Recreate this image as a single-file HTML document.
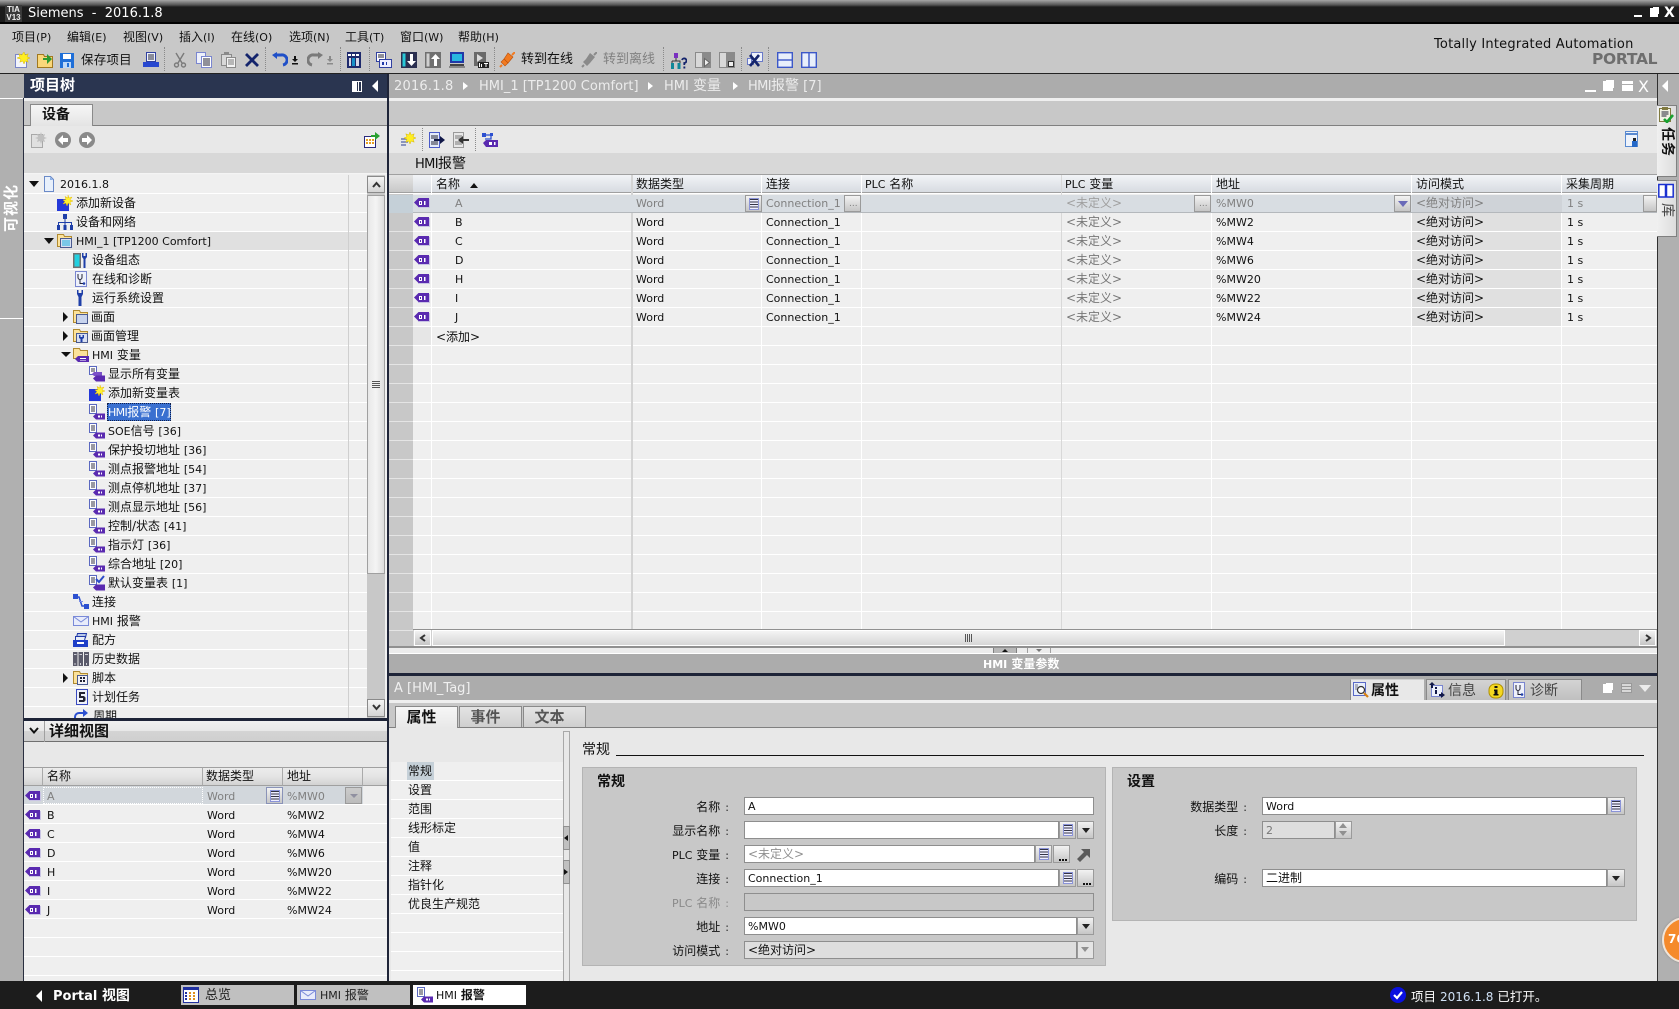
<!DOCTYPE html>
<html lang="zh"><head><meta charset="utf-8"><title>Siemens - 2016.1.8</title>
<style>
html,body{margin:0;padding:0;width:1679px;height:1009px;overflow:hidden;background:#e8e8e8}
body{position:relative;font:12px/19px "DejaVu Sans","WenQuanYi Zen Hei","Noto Sans CJK SC",sans-serif;color:#111}
div,p,svg{position:absolute;margin:0;box-sizing:border-box}
p{white-space:nowrap;height:19px;line-height:19px}
svg{width:16px;height:16px;overflow:visible}
u{text-decoration:none;font-size:11px}
u.n{letter-spacing:-.6px}
em{font-style:normal;font-size:14px}
.g{color:#808080}
.w{color:#fff}
.sep{width:0;border-left:1px dotted #8a8a8a;top:47px;height:24px}
.hd{top:175px;height:18px;background:linear-gradient(#f2f4f7,#d6dae0);border-right:1px solid #b4b4b4}
.dh{top:767px;height:19px;background:linear-gradient(#ececec 0,#e4e4e4 50%,#d2d2d2);border-top:1px solid #a0a0a0;border-bottom:1px solid #a0a0a0;border-right:1px solid #aaa}
.f{background:#fff;border:1px solid #8e8e8e;height:18px;padding-left:3px;line-height:17px;white-space:nowrap}
.b{background:linear-gradient(#f2f2f2,#c6c6c6);border:1px solid #9a9a9a;height:18px;width:17px}
.tab{top:706px;height:21px;border:1px solid #8a8a8a;border-bottom:0;background:linear-gradient(#e4e4e4,#cfcfcf);padding:0 10px 0 0;text-align:center;font-size:15px;font-weight:bold;line-height:20px;color:#555}
.v{background:#fff;top:175px;width:1px}
.lb{text-align:right}
.lb span{margin-left:5px;font-size:11px;color:#222}
.dot:before{content:"";position:absolute;left:5px;top:13px;width:8px;height:2px;background:repeating-linear-gradient(90deg,#111 0 2px,transparent 2px 3px)}
.dn:before{content:"";position:absolute;left:4px;top:6px;border:4px solid transparent;border-top:5px solid #222;border-bottom:0}
.ls:before{content:"";position:absolute;left:3px;top:2px;width:10px;height:12px;background:repeating-linear-gradient(#334 0 1px,#eef 1px 2.5px);border:1px solid #8a93d8;box-sizing:border-box}
</style></head>
<body>
<svg style="display:none"><defs>
<symbol id="tag" viewBox="0 0 16 10"><path fill="#c9c4e4" d="M4 1h12v9H4z"/><path fill="#5a2ab0" d="M0 4.500 4.500 0H15v9H4.500z"/><path fill="#fff" d="M5 3h3v4H5zM10 3h1.500v4H10z"/><path fill="#5a2ab0" d="M6 4h1v2H6z"/></symbol>
<symbol id="tb" viewBox="0 0 16 16"><path fill="#fff" stroke="#5a68c0" d="M.5.5h7v9h-7z"/><path stroke="#334" d="M2 3h4M2 5h4M2 7h4"/><path fill="#5a2ab0" d="M4 12.500 7 9.500h9v6H7z"/><path fill="#fff" d="M9 11.500h2v2H9zM12 11.500h1v2h-1z"/></symbol>
<symbol id="tball" viewBox="0 0 16 16"><path fill="#fff" stroke="#5a68c0" d="M.5.5h7v8h-7z"/><path stroke="#334" d="M2 3h4M2 5h4"/><path fill="#7a50c8" d="M3 8l2-2h8v4H5z"/><path fill="#5a2ab0" d="M4 12.500 7 9.500h9v6H7z"/></symbol>
<symbol id="tbc" viewBox="0 0 16 16"><path fill="#fff" stroke="#5a68c0" d="M.5.500h7v9h-7z"/><path stroke="#334" d="M2 3h4M2 5h4M2 7h4"/><path fill="#5a2ab0" d="M4 12.500 7 9.500h9v6H7z"/><path fill="none" stroke="#2c4cc8" stroke-width="2" d="M7 4l3 3 5-6"/></symbol>
<symbol id="add" viewBox="0 0 16 16"><path fill="#2438d8" d="M0 4h12v12H0z"/><path fill="#fff030" stroke="#e8c000" stroke-width=".5" d="M11 0l1 3 3-1-2 3 3 1-3 1 1 3-3-2-1 3-1-3-3 1 2-2.500-2-1.500 3-.5-1-3 3 1.500z"/></symbol>
<symbol id="net" viewBox="0 0 16 16"><g fill="#1f3fa8"><path d="M6 0h4v5H6zM7.500 5h1v3h-1zM1 8h14v1H1zM1 9h1v2H1zM7.500 9h1v2h-1zM14 9h1v2h-1zM0 11h3v5H0zM6.500 11h3v5h-3zM13 11h3v5h-3z"/></g></symbol>
<symbol id="proj" viewBox="0 0 16 16"><path fill="#e8f0fb" stroke="#6a8ac8" d="M3.500.5h6l3 3v12h-9z"/><path fill="#8ab0e8" d="M9 1l3 3H9z"/></symbol>
<symbol id="hmi" viewBox="0 0 16 16"><path fill="#fce29a" stroke="#b08a30" d="M.5 1.500h6l1 2h7v10h-14z"/><path fill="#d8dff0" stroke="#4a5a90" d="M3.500 5.500h11v9h-11z"/><path fill="#78c8e8" d="M5 7h8v6H5z"/></symbol>
<symbol id="cfg" viewBox="0 0 16 16"><path fill="#707070" d="M0 1h8v15H0z"/><path fill="#22d0e0" d="M1.500 2.500h5v12h-5z"/><path fill="#1f3fa8" d="M9 1h1.500v3h2V1H14v4l-1.500 2v9h-2V7L9 5z"/></symbol>
<symbol id="diag" viewBox="0 0 16 16"><path fill="#eef1fb" stroke="#7a86d0" d="M2.500.5h11v15h-11z"/><path fill="none" stroke="#223" d="M5 3v3.500a2 2 0 0 0 4 0V3M7 9v3.500h3"/><circle cx="11" cy="12.500" r="1.300" fill="#1f3fa8"/></symbol>
<symbol id="wr" viewBox="0 0 16 16"><path fill="#1f3fa8" d="M4 0h1.500v3h3V0H10v4L8.500 7v9h-3V7L4 4z"/></symbol>
<symbol id="fscr" viewBox="0 0 16 16"><path fill="#fce29a" stroke="#b08a30" d="M.5 1.500h6l1 2h7v10h-14z"/><path fill="#c8d4ee" stroke="#4a5a90" d="M3.500 5.500h11v9h-11z"/></symbol>
<symbol id="fwr" viewBox="0 0 16 16"><path fill="#fce29a" stroke="#b08a30" d="M.5 1.500h6l1 2h7v10h-14z"/><path fill="#d8dff0" stroke="#4a5a90" d="M3.500 5.500h11v9h-11z"/><path fill="#1f3fa8" d="M6 7h1.500v2h2V7H11v3l-1.500 1v3h-2v-3L6 10z"/></symbol>
<symbol id="ftag" viewBox="0 0 16 16"><path fill="#fce29a" stroke="#b08a30" d="M.5 1.500h6l1 2h7v8h-14z"/><path fill="#5a2ab0" d="M2 12l3-3h11v6H5z"/><path fill="#fff" d="M7 11h6v1H7zM7 13h6v.5H7z"/></symbol>
<symbol id="fscp" viewBox="0 0 16 16"><path fill="#fce29a" stroke="#b08a30" d="M.5 1.500h6l1 2h7v10h-14z"/><path fill="#f2f2f8" stroke="#4a5a90" d="M4.500 5.500h10v9h-10z"/><path fill="#223" d="M7 7h2v2H7zM10 7h2v2h-2zM7 10h2v2H7zM10 10h2v2h-2z"/></symbol>
<symbol id="conn" viewBox="0 0 16 16"><path fill="none" stroke="#2c50d0" stroke-width="1.500" d="M3 3h3l3 9h4"/><path fill="#2c50d0" d="M0 0h5v5H0zM11 10h5v5h-5z"/><path fill="#7a8ce8" d="M6 7h4v1H6z"/></symbol>
<symbol id="mail" viewBox="0 0 16 16"><path fill="#e8ecfb" stroke="#7a8ad8" d="M.5 3.500h15v9h-15z"/><path fill="none" stroke="#7a8ad8" d="M.5 3.500 8 9l7.500-5.500"/></symbol>
<symbol id="rec" viewBox="0 0 16 16"><path fill="#b8c8e8" stroke="#2038a8" d="M4.500 1.500h9l-1 4h-9z"/><path fill="#e8eef8" stroke="#2038a8" d="M2.500 4.500h10l-1 4h-9z"/><path fill="#1f3fc8" d="M0 8h15v7H0z"/><path fill="#fff" d="M4 10h7v2H4z"/></symbol>
<symbol id="his" viewBox="0 0 16 16"><path fill="#5a5a6a" d="M0 1h4.500v14H0zM5.500 1H10v14H5.500zM11 1h5v14h-5z"/><path fill="#d0d0d8" d="M1 3h2.500v1H1zM6.500 3H9v1H6.500zM12 3h3v1h-3zM1.500 12h1v2h-1zM7 12h1v2H7zM13 12h1v2h-1z"/></symbol>
<symbol id="five" viewBox="0 0 16 16"><path fill="#eef1fb" stroke="#3a4ac0" d="M2.500.5h11v15h-11z"/><path fill="#223" d="M5 3h6v2H7v2h3l1.500 1.500v3L10 13H5v-2h4V9H5z"/></symbol>
<symbol id="cyc" viewBox="0 0 16 16"><path fill="none" stroke="#2c50d0" stroke-width="2" d="M2 15V9a4 4 0 0 1 4-4h6"/><path fill="#2c50d0" d="M10 1l5 4-5 4z"/></symbol>
<symbol id="new" viewBox="0 0 16 16"><path fill="#f2f4fb" stroke="#7a86c8" d="M1.500 2.500h11v13h-11z"/><path fill="#ffee22" stroke="#d8b800" stroke-width=".5" d="M10 0l1.200 3 3-1.200-1.200 3L16 6l-3 1.200 1.200 3-3-1.200-1.200 3-1.200-3-3 1.200 1.200-3L3 6l3-1.200-1.200-3 3 1.200z"/></symbol>
<symbol id="open" viewBox="0 0 16 16"><path fill="#fad77a" stroke="#a07820" d="M.5 2.500h6l1 2h8v11h-15z"/><path fill="#2c9a30" d="M6 6h4V2l5 5-5 5V8H6z"/></symbol>
<symbol id="save" viewBox="0 0 16 16"><path fill="#1f6fd8" d="M1 1h14v15H1z"/><path fill="#fff" d="M4 2h8v5H4z"/><path fill="#bcd8f8" d="M4 10h8v6H4z"/><path fill="#1f6fd8" d="M8 11h2v4H8z"/></symbol>
<symbol id="print" viewBox="0 0 16 16"><path fill="#f0f4ff" stroke="#3040a0" d="M3.500.5h9v9h-9z"/><path stroke="#223" d="M5 3h6M5 5h6M5 7h6"/><path fill="#2848d0" d="M0 10h16v5H0z"/></symbol>
<symbol id="cut" viewBox="0 0 16 16"><path fill="none" stroke="#7a7a7a" stroke-width="1.400" d="M4 1l6 10M12 1 6 11"/><circle cx="4.500" cy="13" r="2" fill="none" stroke="#7a7a7a" stroke-width="1.400"/><circle cx="11.500" cy="13" r="2" fill="none" stroke="#7a7a7a" stroke-width="1.400"/></symbol>
<symbol id="copy" viewBox="0 0 16 16"><path fill="#eef1fb" stroke="#7a86d0" d="M.5.5h9v11h-9z"/><path fill="#fff" stroke="#7a86d0" d="M5.500 4.500h10v11h-10z"/><path stroke="#223" d="M7 7h7M7 9h7M7 11h7M7 13h7"/></symbol>
<symbol id="paste" viewBox="0 0 16 16"><path fill="#d8d8d8" stroke="#8a8a8a" d="M1.500 2.500h10v11h-10z"/><path fill="#8a8a8a" d="M4 0h5v3H4z"/><path fill="#f4f4f4" stroke="#8a8a8a" d="M6.500 5.500h9v10h-9z"/><path stroke="#777" d="M8 8h6M8 10h6M8 12h6"/></symbol>
<symbol id="del" viewBox="0 0 16 16"><path fill="none" stroke="#14246c" stroke-width="2.800" d="M2 2l12 12M14 2 2 14"/></symbol>
<symbol id="undo" viewBox="0 0 16 16"><path fill="none" stroke="#2050c8" stroke-width="3" d="M4 3h5a5 5 0 0 1 2 10"/><path fill="#2050c8" d="M0 3l5-3v7z"/></symbol>
<symbol id="redo" viewBox="0 0 16 16"><path fill="none" stroke="#7a7a7a" stroke-width="3" d="M12 3H7a5 5 0 0 0-2 10"/><path fill="#7a7a7a" d="M16 3l-5-3v7z"/></symbol>
<symbol id="dnl" viewBox="0 0 8 16"><path fill="#111" d="M3 4h2v3h2L4 10 1 7h2zM1 11h6v1.500H1z"/></symbol>
<symbol id="dng" viewBox="0 0 8 16"><path fill="#8a8a8a" d="M3 4h2v3h2L4 10 1 7h2zM1 11h6v1.500H1z"/></symbol>
<symbol id="tbl" viewBox="0 0 16 16"><path fill="#1e2a6c" d="M1 0h14v16H1z"/><path fill="#fff" d="M2 2h3v2H2zM6 2h3v2H6zM10 2h3v2h-3z"/><path fill="#d8d8e8" d="M3 6h2v8H3zM10 6h3v8h-3z"/><path fill="#1890c8" d="M6 6h3v8H6z"/></symbol>
<symbol id="devb" viewBox="0 0 16 16"><path fill="#fff" stroke="#3040a0" d="M.5.500h9v9h-9z"/><path stroke="#223" d="M2 3h6M2 5h6"/><path fill="#eef" stroke="#3040a0" d="M3.500 7.500h12v8h-12z"/><path fill="#2038a8" d="M6 10h2v3H6zM10 10h1v3h-1z"/></symbol>
<symbol id="dl" viewBox="0 0 16 16"><path fill="#2a2f50" d="M0 0h16v16H0z"/><path fill="#28c8d8" d="M1.500 1.500h3v13h-3z"/><path fill="#fff" d="M9 2h3v7h3l-4.500 5L6 9h3z"/></symbol>
<symbol id="ul" viewBox="0 0 16 16"><path fill="#707070" d="M0 0h16v16H0z"/><path fill="#d0d0d0" d="M1.500 1.500h3v13h-3z"/><path fill="#fff" d="M9 14h3V7h3l-4.500-5L6 7h3z"/></symbol>
<symbol id="pc" viewBox="0 0 16 16"><path fill="#2038a8" d="M1 0h14v11H1z"/><path fill="#28b8e0" d="M3 2h10v7H3z"/><path fill="#444" d="M1 12h14v2H1z"/><path fill="#888" d="M0 14h16v2H0z"/></symbol>
<symbol id="rt" viewBox="0 0 16 16"><path fill="#6a6a6a" d="M1 0h12v14H1z"/><path fill="#ddd" d="M4 2l6 4-6 4z"/><path fill="#222" d="M5 10h11v6H5z"/><path fill="#fff" d="M6 11h1v4H6zM8 12h1v3H8zM11 11h4v1h-1.500v3h-1v-3H11z"/></symbol>
<symbol id="plug" viewBox="0 0 16 16"><path fill="#f27a20" stroke="#b8500c" stroke-width=".6" d="M9 1l5 4-5 6-4-4z"/><path fill="#f27a20" stroke="#b8500c" stroke-width=".6" d="M5 7l4 4-3 3-4-4z"/><path stroke="#f27a20" stroke-width="2" d="M1 15l2-2M13 3l3-3"/></symbol>
<symbol id="plugg" viewBox="0 0 16 16"><path fill="#8a8a8a" d="M9 1l5 4-5 6-4-4zM5 7l4 4-3 3-4-4z"/><path stroke="#8a8a8a" stroke-width="2" d="M1 15l2-2M13 3l3-3"/></symbol>
<symbol id="help" viewBox="0 0 16 16"><path fill="#7a30c0" d="M3 0h4v5H3z"/><path fill="none" stroke="#333" d="M5 5v3M1 8h8v2M1 8v2"/><path fill="#108898" d="M0 10h3v6H0zM6.500 10h3v6h-3z"/><path fill="none" stroke="#14246c" stroke-width="1.800" d="M11 7a2.300 2.300 0 1 1 2.300 3v2"/><path fill="#14246c" d="M12.400 13.500h1.900v2h-1.900z"/></symbol>
<symbol id="sp1" viewBox="0 0 16 16"><path fill="#8a8a8a" d="M0 0h16v16H0z"/><path fill="#d8d8d8" d="M1 1h6v14H1z"/><path fill="#eee" stroke="#666" d="M9.500 6.500l5 4-5 4z"/></symbol>
<symbol id="sp2" viewBox="0 0 16 16"><path fill="#8a8a8a" d="M0 0h16v16H0z"/><path fill="#d8d8d8" d="M1 1h6v14H1z"/><path fill="#eee" stroke="#333" d="M9.500 9.500h5v5h-5z"/></symbol>
<symbol id="x2" viewBox="0 0 16 16"><path fill="#eef2fb" stroke="#6a7ac8" d="M4.500.5h11v9h-11zM.5 6.500h6v6h-6z"/><path fill="none" stroke="#14246c" stroke-width="2.600" d="M3 3l9 11M12 3 3 14"/></symbol>
<symbol id="hs" viewBox="0 0 16 16"><path fill="#e8effb" stroke="#3c58c8" stroke-width="1.400" d="M.7.700h14.600v14.600H.7z"/><path stroke="#3c58c8" stroke-width="1.400" d="M0 8h16"/></symbol>
<symbol id="vs" viewBox="0 0 16 16"><path fill="#e8effb" stroke="#3c58c8" stroke-width="1.400" d="M.7.700h14.600v14.600H.7z"/><path stroke="#3c58c8" stroke-width="1.400" d="M8 0v16"/></symbol>
<symbol id="ngray" viewBox="0 0 16 16"><path fill="#e0e0e0" stroke="#a8a8a8" d="M.5 2.500h11v13H.5z"/><path fill="#c0c0c0" d="M10 0l1 3 3-1-1 3 3 1-3 1 1 3-3-1-1 3-1-3-3 1 1-3-3-1 3-1-1-3 3 1z"/></symbol>
<symbol id="nav" viewBox="0 0 16 16"><circle cx="8" cy="8" r="8" fill="#8a8a8a"/><path fill="#fff" d="M3 8l5-5v3h5v4H8v3z"/></symbol>
<symbol id="nxt" viewBox="0 0 16 16"><circle cx="8" cy="8" r="8" fill="#8a8a8a"/><path fill="#fff" d="M13 8l-5 5v-3H3V6h5V3z"/></symbol>
<symbol id="imp" viewBox="0 0 16 16"><path fill="#fff" stroke="#2a2a7c" d="M.5 4.500h11v11H.5z"/><path fill="#e8a020" d="M2 7h2v2H2zM5 7h2v2H5zM8 7h2v2H8zM2 10h2v2H2zM5 10h2v2H5zM8 10h2v2H8z"/><path fill="#2aa030" d="M7 3h4V0l5 4-5 4V5H7z"/></symbol>
<symbol id="nw2" viewBox="0 0 16 16"><path stroke="#6a78b0" stroke-width="1.500" d="M1 7h8M1 10h7M1 13h5"/><path fill="#ffee22" stroke="#d8b800" stroke-width=".5" d="M10 0l1.200 3 3-1.200-1.200 3L16 6l-3 1.200 1.200 3-3-1.200-1.200 3-1.200-3-3 1.200 1.200-3L4 6l3-1.200-1.200-3 3 1.200z"/></symbol>
<symbol id="exp" viewBox="0 0 16 16"><path fill="#e4eafb" stroke="#4a5ac8" d="M.5.500h10v15H.5z"/><path stroke="#223" d="M2 4h7M2 6h7M2 10h7M2 12h7"/><path fill="#111848" d="M5 7h6V4l5 4-5 4V9H5z"/></symbol>
<symbol id="imp2" viewBox="0 0 16 16"><path fill="#e8e8e8" stroke="#9a9a9a" d="M.5.500h10v15H.5z"/><path stroke="#777" d="M2 4h7M2 6h7M2 10h7M2 12h7"/><path fill="#333" d="M16 7h-6V4L5 8l5 4V9h6z"/></symbol>
<symbol id="syn" viewBox="0 0 16 16"><path fill="none" stroke="#2c50d0" stroke-width="1.300" d="M3 3h6v4H3"/><path fill="#2c50d0" d="M0 1h4v4H0zM8 1h3v3H8z"/><path fill="#5a2ab0" d="M1 11l3-3h12v7H4z"/><path fill="#fff" d="M7 10h3v3H7zM12 10h1.500v3H12z"/></symbol>
<symbol id="usr" viewBox="0 0 16 16"><path fill="#eef3fb" stroke="#5a8ad0" d="M1.500.5h12v15h-12z"/><path fill="#5a8ad0" d="M2 2h11v2H2z"/><path fill="#222" d="M9 7h3v3H9z"/><path fill="#2468c8" d="M8 10h5v6H8z"/></symbol>
<symbol id="task" viewBox="0 0 16 16"><path fill="#f2f2e4" stroke="#807a40" d="M1.500 1.500h11v13h-11z"/><path fill="#807a40" d="M4 0h6v3H4z"/><path stroke="#223" d="M3.500 5h7M3.500 7h7M3.500 9h5"/><path fill="none" stroke="#18a030" stroke-width="2.600" d="M6 12l3 3 6-7"/></symbol>
<symbol id="lib" viewBox="0 0 16 16"><path fill="#fff" stroke="#1a30d0" stroke-width="1.500" d="M.8 1.500h6.700v12.500H.8zM8.500 1.500h6.700v12.500H8.500z"/></symbol>
<symbol id="prop" viewBox="0 0 16 16"><path fill="#e8effb" stroke="#5a6ac8" d="M.5.500h12v13H.5z"/><path stroke="#778" d="M2 3h3M2 5h3M2 7h3"/><circle cx="8" cy="8" r="3.500" fill="#fff" stroke="#333" stroke-width="1.200"/><path stroke="#d88010" stroke-width="2.200" d="M11 11l4 4"/></symbol>
<symbol id="inf" viewBox="0 0 16 16"><path fill="#eef1fb" stroke="#7a86d0" d="M2.500 3.500h11v11h-11z"/><path fill="#111848" d="M0 3l3-3 3 3H4v3H2V3zM6 5h2v2H6zM6 8h2v4H6zM10 12h2v-2l4 3-4 3v-2h-2z"/></symbol>
<symbol id="yel" viewBox="0 0 16 16"><rect x="1" y="1" width="14" height="14" rx="6" fill="#f4d820" stroke="#b09000"/><path fill="#111" d="M6.500 3h3v2h-3zM6 6.500h3.500V11h1v1.500h-5V11h1V8H6z"/></symbol>
<symbol id="ck" viewBox="0 0 16 16"><circle cx="8" cy="8" r="8" fill="#0a10e0"/><path fill="none" stroke="#fff" stroke-width="2.200" d="M4 8l3 3 5-6"/></symbol>
<symbol id="ov" viewBox="0 0 16 16"><path fill="#fff" stroke="#2030a0" d="M.5.500h15v15H.5z"/><path fill="#2030a0" d="M1 1h14v2H1zM2 5h2v2H2zM2 8h2v2H2zM2 11h2v2H2z"/><path fill="#e09020" d="M6 5h2v2H6zM10 5h2v2h-2zM6 8h2v2H6zM10 8h2v2h-2zM6 11h2v2H6zM10 11h2v2h-2z"/></symbol>
<symbol id="arr" viewBox="0 0 16 16"><path fill="#5a5a5a" d="M2 13 9 6 6 3h9v9l-3-3-7 7z"/></symbol>
</defs></svg>

<!-- title bar -->
<div style="left:0;top:0;width:1679px;height:23px;background:#1c1c1c"></div>
<div style="left:0;top:0;width:1679px;height:7px;background:linear-gradient(#a6a6a6,#555 70%,#1c1c1c)"></div>
<div style="left:0;top:22px;width:1679px;height:2px;background:#000"></div>
<div style="left:5px;top:5px;width:17px;height:17px;background:#3a3a3a;color:#f0f0f0;font:bold 8px/8px 'Liberation Sans',sans-serif;text-align:center;padding-top:1px">TIA<br>V13</div>
<p class="w" style="left:28px;top:4px;font-size:13px">Siemens &nbsp;- &nbsp;2016.1.8</p>
<div style="left:1634px;top:15px;width:8px;height:2px;background:#fff"></div>
<div style="left:1650px;top:8px;width:8px;height:9px;background:#fff;border-top:2px solid #fff;box-shadow:2px -2px 0 -1px #fff"></div>
<p class="w" style="left:1664px;top:4px;font-size:14px;font-weight:bold">X</p>

<!-- menu -->
<div style="left:0;top:24px;width:1679px;height:50px;background:#c8c8c8;border-bottom:1px solid #222"></div>
<p style="left:12px;top:28px">项目<u>(P)</u></p>
<p style="left:67px;top:28px">编辑<u>(E)</u></p>
<p style="left:123px;top:28px">视图<u>(V)</u></p>
<p style="left:179px;top:28px">插入<u>(I)</u></p>
<p style="left:231px;top:28px">在线<u>(O)</u></p>
<p style="left:289px;top:28px">选项<u>(N)</u></p>
<p style="left:345px;top:28px">工具<u>(T)</u></p>
<p style="left:400px;top:28px">窗口<u>(W)</u></p>
<p style="left:458px;top:28px">帮助<u>(H)</u></p>
<p style="left:1434px;top:35px;font-size:13px;letter-spacing:.2px">Totally Integrated Automation</p>
<p style="left:1592px;top:50px;font-size:15.500px;font-weight:bold;color:#6e6e6e;letter-spacing:-.3px">PORTAL</p>

<!-- main toolbar -->
<svg style="left:14px;top:52px"><use href="#new"/></svg>
<svg style="left:37px;top:52px"><use href="#open"/></svg>
<svg style="left:59px;top:52px"><use href="#save"/></svg>
<p style="left:81px;top:50px;font-size:12.500px;letter-spacing:.2px">保存项目</p>
<svg style="left:143px;top:52px"><use href="#print"/></svg>
<div class="sep" style="left:164px"></div>
<svg style="left:172px;top:52px"><use href="#cut"/></svg>
<svg style="left:196px;top:52px"><use href="#copy"/></svg>
<svg style="left:220px;top:52px"><use href="#paste"/></svg>
<svg style="left:244px;top:52px"><use href="#del"/></svg>
<div class="sep" style="left:265px"></div>
<svg style="left:272px;top:52px"><use href="#undo"/></svg>
<svg style="left:291px;top:52px;width:8px"><use href="#dnl"/></svg>
<svg style="left:307px;top:52px"><use href="#redo"/></svg>
<svg style="left:326px;top:52px;width:8px"><use href="#dng"/></svg>
<div class="sep" style="left:340px"></div>
<svg style="left:346px;top:52px"><use href="#tbl"/></svg>
<div class="sep" style="left:369px"></div>
<svg style="left:376px;top:52px"><use href="#devb"/></svg>
<svg style="left:401px;top:52px"><use href="#dl"/></svg>
<svg style="left:425px;top:52px"><use href="#ul"/></svg>
<svg style="left:449px;top:52px"><use href="#pc"/></svg>
<svg style="left:473px;top:52px"><use href="#rt"/></svg>
<div class="sep" style="left:494px"></div>
<svg style="left:499px;top:52px"><use href="#plug"/></svg>
<p style="left:521px;top:50px;font-size:13px">转到在线</p>
<svg style="left:581px;top:52px"><use href="#plugg"/></svg>
<p class="g" style="left:603px;top:50px;font-size:13px">转到离线</p>
<div class="sep" style="left:663px"></div>
<svg style="left:671px;top:53px"><use href="#help"/></svg>
<svg style="left:695px;top:52px"><use href="#sp1"/></svg>
<svg style="left:719px;top:52px"><use href="#sp2"/></svg>
<div class="sep" style="left:741px"></div>
<svg style="left:747px;top:52px"><use href="#x2"/></svg>
<div class="sep" style="left:768px"></div>
<svg style="left:777px;top:52px"><use href="#hs"/></svg>
<svg style="left:801px;top:52px"><use href="#vs"/></svg>

<!-- left strip -->
<div style="left:0;top:74px;width:24px;height:907px;background:#b0b0b0"></div>
<div style="left:0;top:98px;width:24px;height:1px;background:#fff"></div>
<div style="left:0;top:318px;width:24px;height:1px;background:#fff"></div>
<p class="w" style="left:2px;top:182px;width:19px;height:50px;writing-mode:vertical-rl;text-orientation:sideways;transform:rotate(180deg);font-size:15px;line-height:19px;font-weight:bold;letter-spacing:1px">可视化</p>

<!-- project tree -->
<div style="left:24px;top:74px;width:365px;height:646px;background:#f0f0f0"></div>
<div style="left:24px;top:74px;width:363px;height:24px;background:#2a3550"></div>
<p class="w" style="left:30px;top:76px;font-size:15px;font-weight:bold">项目树</p>
<div style="left:352px;top:81px;width:10px;height:11px;border:1px solid #fff;background:linear-gradient(90deg,#fff 0 4px,#2a3550 4px 5px,#fff 5px 6px,#2a3550 6px)"></div>
<div style="left:372px;top:80px;width:0;height:0;border:6px solid transparent;border-right:6px solid #fff;border-left:0"></div>
<div style="left:24px;top:98px;width:363px;height:3px;background:#efefef"></div>
<div style="left:24px;top:101px;width:363px;height:25px;background:#c8c8c8;border-bottom:1px solid #808080"></div>
<div style="left:30px;top:104px;width:63px;height:22px;background:linear-gradient(#f6f6f6,#e4e4e4);border:1px solid #8a8a8a;border-bottom:0"></div>
<p style="left:42px;top:106px;font-size:14px;font-weight:bold">设备</p>
<div style="left:24px;top:126px;width:363px;height:27px;background:#e8e8e8"></div>
<svg style="left:31px;top:132px"><use href="#ngray"/></svg>
<svg style="left:55px;top:132px"><use href="#nav"/></svg>
<svg style="left:79px;top:132px"><use href="#nxt"/></svg>
<svg style="left:364px;top:132px"><use href="#imp"/></svg>
<div style="left:24px;top:153px;width:363px;height:21px;background:#d8d8d8;border-bottom:1px solid #f4f4f4"></div>
<div style="left:24px;top:175px;width:343px;height:543px;background:repeating-linear-gradient(#efefef 0 18px,#fff 18px 19px)"></div>
<div style="left:24px;top:232px;width:343px;height:18px;background:#e0e0e0"></div>
<div style="left:348px;top:175px;width:1px;height:543px;background:#cfcfcf"></div>
<div style="left:367px;top:175px;width:18px;height:543px;background:#c8c8c8"></div>
<div style="left:367px;top:176px;width:18px;height:17px;background:linear-gradient(#f4f4f4,#d4d4d4);border:1px solid #8a8a8a"></div>
<svg style="left:372px;top:180px;width:9px;height:9px" viewBox="0 0 9 9"><path fill="none" stroke="#333" stroke-width="2" d="M1 7l3.500-4L8 7"/></svg>
<div style="left:367px;top:195px;width:18px;height:379px;background:linear-gradient(90deg,#e8e8e8,#f4f4f4 50%,#dcdcdc);border:1px solid #a0a0a0"></div>
<div style="left:372px;top:381px;width:8px;height:7px;background:repeating-linear-gradient(#555 0 1px,transparent 1px 2px)"></div>
<div style="left:367px;top:699px;width:18px;height:18px;background:linear-gradient(#f4f4f4,#d4d4d4);border:1px solid #8a8a8a"></div>
<svg style="left:372px;top:703px;width:9px;height:9px" viewBox="0 0 9 9"><path fill="none" stroke="#333" stroke-width="2" d="M1 2l3.500 4L8 2"/></svg>

<div style="left:29px;top:181px;width:0;height:0;border:5px solid transparent;border-top:6px solid #111;border-bottom:0"></div>
<svg style="left:41px;top:176px"><use href="#proj"/></svg><p style="left:60px;top:175px"><u>2016.1.8</u></p>
<svg style="left:57px;top:195px"><use href="#add"/></svg><p style="left:76px;top:194px">添加新设备</p>
<svg style="left:57px;top:214px"><use href="#net"/></svg><p style="left:76px;top:213px">设备和网络</p>
<div style="left:44px;top:238px;width:0;height:0;border:5px solid transparent;border-top:6px solid #111;border-bottom:0"></div>
<svg style="left:57px;top:233px"><use href="#hmi"/></svg><p style="left:76px;top:232px"><u>HMI_1 [TP1200 Comfort]</u></p>
<svg style="left:73px;top:252px"><use href="#cfg"/></svg><p style="left:92px;top:251px">设备组态</p>
<svg style="left:73px;top:271px"><use href="#diag"/></svg><p style="left:92px;top:270px">在线和诊断</p>
<svg style="left:73px;top:290px"><use href="#wr"/></svg><p style="left:92px;top:289px">运行系统设置</p>
<div style="left:63px;top:312px;width:0;height:0;border:5px solid transparent;border-left:5px solid #111;border-right:0"></div>
<svg style="left:73px;top:309px"><use href="#fscr"/></svg><p style="left:91px;top:308px">画面</p>
<div style="left:63px;top:331px;width:0;height:0;border:5px solid transparent;border-left:5px solid #111;border-right:0"></div>
<svg style="left:73px;top:328px"><use href="#fwr"/></svg><p style="left:91px;top:327px">画面管理</p>
<div style="left:61px;top:352px;width:0;height:0;border:5px solid transparent;border-top:5px solid #111;border-bottom:0"></div>
<svg style="left:73px;top:347px"><use href="#ftag"/></svg><p style="left:92px;top:346px"><u>HMI</u> 变量</p>
<svg style="left:89px;top:366px"><use href="#tball"/></svg><p style="left:108px;top:365px">显示所有变量</p>
<svg style="left:89px;top:385px"><use href="#add"/></svg><p style="left:108px;top:384px">添加新变量表</p>
<svg style="left:89px;top:404px"><use href="#tb"/></svg>
<div style="left:107px;top:403px;width:64px;height:18px;background:#3a70d0;border:1px dotted #10204a"></div>
<p class="w" style="left:108px;top:403px"><u class="n">HMI</u>报警 <u>[7]</u></p>
<svg style="left:89px;top:423px"><use href="#tb"/></svg><p style="left:108px;top:422px"><u>SOE</u>信号 <u>[36]</u></p>
<svg style="left:89px;top:442px"><use href="#tb"/></svg><p style="left:108px;top:441px">保护投切地址 <u>[36]</u></p>
<svg style="left:89px;top:461px"><use href="#tb"/></svg><p style="left:108px;top:460px">测点报警地址 <u>[54]</u></p>
<svg style="left:89px;top:480px"><use href="#tb"/></svg><p style="left:108px;top:479px">测点停机地址 <u>[37]</u></p>
<svg style="left:89px;top:499px"><use href="#tb"/></svg><p style="left:108px;top:498px">测点显示地址 <u>[56]</u></p>
<svg style="left:89px;top:518px"><use href="#tb"/></svg><p style="left:108px;top:517px">控制/状态 <u>[41]</u></p>
<svg style="left:89px;top:537px"><use href="#tb"/></svg><p style="left:108px;top:536px">指示灯 <u>[36]</u></p>
<svg style="left:89px;top:556px"><use href="#tb"/></svg><p style="left:108px;top:555px">综合地址 <u>[20]</u></p>
<svg style="left:89px;top:575px"><use href="#tbc"/></svg><p style="left:108px;top:574px">默认变量表 <u>[1]</u></p>
<svg style="left:73px;top:594px"><use href="#conn"/></svg><p style="left:92px;top:593px">连接</p>
<svg style="left:73px;top:613px"><use href="#mail"/></svg><p style="left:92px;top:612px"><u>HMI</u> 报警</p>
<svg style="left:73px;top:632px"><use href="#rec"/></svg><p style="left:92px;top:631px">配方</p>
<svg style="left:73px;top:651px"><use href="#his"/></svg><p style="left:92px;top:650px">历史数据</p>
<div style="left:63px;top:673px;width:0;height:0;border:5px solid transparent;border-left:5px solid #111;border-right:0"></div>
<svg style="left:73px;top:670px"><use href="#fscp"/></svg><p style="left:92px;top:669px">脚本</p>
<svg style="left:74px;top:689px"><use href="#five"/></svg><p style="left:92px;top:688px">计划任务</p>
<svg style="left:73px;top:708px"><use href="#cyc"/></svg><p style="left:93px;top:707px;height:11px;overflow:hidden">周期</p>
<div style="left:24px;top:718px;width:365px;height:3px;background:#1e2438"></div>

<!-- detail view -->
<div style="left:24px;top:721px;width:363px;height:260px;background:#e8e8e8"></div>
<div style="left:24px;top:721px;width:363px;height:21px;background:linear-gradient(#f0f0f0 0,#e8e8e8 50%,#d4d4d4 50%,#cfcfcf);border-bottom:1px solid #707070"></div>
<div style="left:44px;top:721px;width:1px;height:21px;background:#a0a0a0"></div>
<svg style="left:29px;top:727px;width:10px;height:8px" viewBox="0 0 10 8"><path fill="none" stroke="#111" stroke-width="2" d="M1 1l4 4.500L9 1"/></svg>
<p style="left:49px;top:722px;font-size:15px;font-weight:bold">详细视图</p>
<div class="dh" style="left:24px;width:19px"></div>
<div class="dh" style="left:43px;width:160px"></div>
<div class="dh" style="left:203px;width:80px"></div>
<div class="dh" style="left:283px;width:80px"></div>
<div class="dh" style="left:363px;width:24px;border-right:0"></div>
<p style="left:47px;top:767px">名称</p><p style="left:206px;top:767px">数据类型</p><p style="left:287px;top:767px">地址</p>
<div style="left:24px;top:786px;width:363px;height:195px;background:repeating-linear-gradient(#efefef 0 18px,#fff 18px 19px)"></div>
<div style="left:24px;top:786px;width:339px;height:19px;background:#d2d7dc;border-bottom:1px solid #fff"></div>
<div style="left:43px;top:787px;width:160px;height:17px;border:1px dotted #fff"></div>
<div class="b ls" style="left:266px;top:787px;width:17px;height:17px;border-color:#8a93b8"></div>
<div class="b" style="left:345px;top:787px;height:17px;background:linear-gradient(#ccc,#bbb)"></div>
<div style="left:350px;top:794px;width:0;height:0;border:4px solid transparent;border-top:4px solid #9090a0;border-bottom:0"></div>
<svg style="left:25px;top:791px;height:10px"><use href="#tag"/></svg><svg style="left:25px;top:810px;height:10px"><use href="#tag"/></svg><svg style="left:25px;top:829px;height:10px"><use href="#tag"/></svg><svg style="left:25px;top:848px;height:10px"><use href="#tag"/></svg><svg style="left:25px;top:867px;height:10px"><use href="#tag"/></svg><svg style="left:25px;top:886px;height:10px"><use href="#tag"/></svg><svg style="left:25px;top:905px;height:10px"><use href="#tag"/></svg>
<p class="g" style="left:47px;top:787px"><u>A</u></p><p class="g" style="left:207px;top:787px"><u>Word</u></p><p class="g" style="left:287px;top:787px"><u>%MW0</u></p>
<p style="left:47px;top:806px"><u>B</u></p><p style="left:207px;top:806px"><u>Word</u></p><p style="left:287px;top:806px"><u>%MW2</u></p>
<p style="left:47px;top:825px"><u>C</u></p><p style="left:207px;top:825px"><u>Word</u></p><p style="left:287px;top:825px"><u>%MW4</u></p>
<p style="left:47px;top:844px"><u>D</u></p><p style="left:207px;top:844px"><u>Word</u></p><p style="left:287px;top:844px"><u>%MW6</u></p>
<p style="left:47px;top:863px"><u>H</u></p><p style="left:207px;top:863px"><u>Word</u></p><p style="left:287px;top:863px"><u>%MW20</u></p>
<p style="left:47px;top:882px"><u>I</u></p><p style="left:207px;top:882px"><u>Word</u></p><p style="left:287px;top:882px"><u>%MW22</u></p>
<p style="left:47px;top:901px"><u>J</u></p><p style="left:207px;top:901px"><u>Word</u></p><p style="left:287px;top:901px"><u>%MW24</u></p>

<!-- vertical divider -->
<div style="left:387px;top:74px;width:2px;height:907px;background:#1e2438"></div>
<div style="left:23px;top:98px;width:1px;height:883px;background:#2a2f40"></div>

<!-- editor header -->
<div style="left:389px;top:74px;width:1268px;height:24px;background:#acacac"></div>
<p style="left:394px;top:77px;font-size:13px;color:#ececec;letter-spacing:.2px">2016.1.8</p>
<div style="left:463px;top:82px;width:0;height:0;border:4px solid transparent;border-left:5px solid #fff;border-right:0"></div>
<p style="left:479px;top:77px;font-size:13px;color:#ececec">HMI_1 [TP1200 Comfort]</p>
<div style="left:648px;top:82px;width:0;height:0;border:4px solid transparent;border-left:5px solid #fff;border-right:0"></div>
<p style="left:664px;top:77px;font-size:13px;color:#ececec">HMI <em>变量</em></p>
<div style="left:733px;top:82px;width:0;height:0;border:4px solid transparent;border-left:5px solid #fff;border-right:0"></div>
<p style="left:748px;top:77px;font-size:13px;color:#ececec"><span style="letter-spacing:-.6px">HMI</span><em>报警</em> [7]</p>
<div style="left:1585px;top:90px;width:11px;height:2px;background:#fff"></div>
<div style="left:1603px;top:81px;width:10px;height:10px;background:#fff;box-shadow:2px -2px 0 -1px #fff"></div>
<div style="left:1622px;top:81px;width:11px;height:10px;background:#fff;border-top:3px solid #fff;box-shadow:inset 0 1px 0 #acacac"></div>
<p class="w" style="left:1638px;top:77px;font-size:16px">X</p>
<div style="left:1657px;top:74px;width:22px;height:907px;background:#b0b0b0;border-left:1px solid #303030"></div>
<div style="left:1662px;top:80px;width:0;height:0;border:6px solid transparent;border-right:6px solid #fff;border-left:0"></div>
<div style="left:1657px;top:105px;width:20px;height:72px;background:linear-gradient(90deg,#f0f0f0,#dcdcdc);border:1px solid #808080;border-left:0"></div>
<svg style="left:1658px;top:107px"><use href="#task"/></svg>
<p style="left:1658px;top:127px;width:18px;height:32px;writing-mode:vertical-rl;text-orientation:sideways;line-height:18px;font-size:14px;font-weight:bold;letter-spacing:1px">任务</p>
<div style="left:1657px;top:180px;width:20px;height:57px;background:linear-gradient(90deg,#f0f0f0,#dcdcdc);border:1px solid #808080;border-left:0"></div>
<svg style="left:1658px;top:183px"><use href="#lib"/></svg>
<p style="left:1658px;top:203px;width:18px;height:20px;writing-mode:vertical-rl;text-orientation:sideways;line-height:18px;font-size:14px;color:#444">库</p>

<!-- editor -->
<div style="left:389px;top:98px;width:1268px;height:3px;background:#efefef"></div>
<div style="left:389px;top:101px;width:1268px;height:25px;background:#c8c8c8;border-bottom:1px solid #808080"></div>
<div style="left:389px;top:126px;width:1268px;height:27px;background:#e8e8e8"></div>
<svg style="left:400px;top:132px"><use href="#nw2"/></svg>
<div class="sep" style="left:422px;top:128px;height:23px"></div>
<svg style="left:429px;top:132px"><use href="#exp"/></svg>
<svg style="left:453px;top:132px"><use href="#imp2"/></svg>
<div class="sep" style="left:475px;top:128px;height:23px"></div>
<svg style="left:482px;top:132px"><use href="#syn"/></svg>
<svg style="left:1624px;top:131px"><use href="#usr"/></svg>
<div style="left:389px;top:153px;width:1268px;height:21px;background:#d8d8d8"></div>
<p style="left:415px;top:155px;font-size:13px;font-weight:normal;letter-spacing:-.6px">HMI<em style="letter-spacing:0">报警</em></p>

<!-- table header -->
<div style="left:389px;top:174px;width:1268px;height:21px;background:#fff;border-top:1px solid #a0a0a0"></div>
<div style="left:389px;top:175px;width:24px;height:17px;background:linear-gradient(#e4e4e4,#c8c8c8)"></div>
<div class="hd" style="left:413px;width:19px"></div>
<div class="hd" style="left:432px;width:200px"></div>
<div class="hd" style="left:632px;width:130px"></div>
<div class="hd" style="left:762px;width:100px"></div>
<div class="hd" style="left:862px;width:200px"></div>
<div class="hd" style="left:1062px;width:150px"></div>
<div class="hd" style="left:1212px;width:200px"></div>
<div class="hd" style="left:1412px;width:150px"></div>
<div class="hd" style="left:1562px;width:95px;border-right:0"></div>
<div style="left:389px;top:192px;width:1268px;height:1px;background:#a0a0a0"></div>
<p style="left:436px;top:175px">名称</p>
<div style="left:470px;top:183px;width:0;height:0;border:4px solid transparent;border-bottom:5px solid #111;border-top:0"></div>
<p style="left:636px;top:175px">数据类型</p><p style="left:766px;top:175px">连接</p>
<p style="left:865px;top:175px"><u>PLC</u> 名称</p><p style="left:1065px;top:175px"><u>PLC</u> 变量</p>
<p style="left:1216px;top:175px">地址</p><p style="left:1416px;top:175px">访问模式</p><p style="left:1566px;top:175px">采集周期</p>

<!-- table body -->
<div style="left:413px;top:194px;width:1244px;height:435px;background:repeating-linear-gradient(#efefef 0 18px,#fff 18px 19px)"></div>
<div style="left:389px;top:194px;width:24px;height:452px;background:repeating-linear-gradient(#c8c8c8 0 18px,#e4e4e4 18px 19px)"></div>
<div style="left:1412px;top:213px;width:150px;height:114px;background:repeating-linear-gradient(#e0e0e0 0 18px,#fff 18px 19px)"></div>
<div class="v" style="left:431px;height:454px"></div>
<div style="left:631px;top:175px;width:2px;height:454px;background:#d4d4d4"></div>
<div class="v" style="left:761px;height:454px"></div>
<div class="v" style="left:861px;height:454px"></div>
<div style="left:1061px;top:175px;width:1px;height:454px;background:#d8d8d8"></div>
<div class="v" style="left:1211px;height:454px"></div>
<div class="v" style="left:1411px;height:454px"></div>
<div class="v" style="left:1561px;height:454px"></div>
<div style="left:413px;top:327px;width:18px;height:18px;background:#e6e6e6"></div>
<div style="left:389px;top:195px;width:24px;height:18px;background:#c5d0d8"></div>
<div style="left:413px;top:195px;width:1244px;height:18px;background:#d8dde2;border-bottom:1px solid #b4b8bc"></div>
<div style="left:1412px;top:195px;width:150px;height:17px;background:#cfd3d8"></div>
<div class="b ls" style="left:745px;top:195px;width:17px;height:17px"></div>
<div class="b" style="left:844px;top:195px;width:17px;height:17px"></div><p class="g" style="left:849px;top:195px;font-size:9px">...</p>
<div class="b" style="left:1194px;top:195px;width:17px;height:17px"></div><p class="g" style="left:1199px;top:195px;font-size:9px">...</p>
<div class="b" style="left:1394px;top:195px;width:17px;height:17px"></div>
<div style="left:1398px;top:201px;width:0;height:0;border:5px solid transparent;border-top:6px solid #6a6ab8;border-bottom:0"></div>
<div class="b" style="left:1643px;top:195px;width:14px;height:17px"></div>

<svg style="left:414px;top:198px;height:10px"><use href="#tag"/></svg><svg style="left:414px;top:217px;height:10px"><use href="#tag"/></svg><svg style="left:414px;top:236px;height:10px"><use href="#tag"/></svg><svg style="left:414px;top:255px;height:10px"><use href="#tag"/></svg><svg style="left:414px;top:274px;height:10px"><use href="#tag"/></svg><svg style="left:414px;top:293px;height:10px"><use href="#tag"/></svg><svg style="left:414px;top:312px;height:10px"><use href="#tag"/></svg>

<p class="g" style="left:455px;top:194px"><u>A</u></p><p class="g" style="left:636px;top:194px"><u>Word</u></p><p class="g" style="left:766px;top:194px"><u>Connection_1</u></p><p style="left:1066px;top:194px;color:#a0a0a0">&lt;未定义&gt;</p><p class="g" style="left:1216px;top:194px"><u>%MW0</u></p><p class="g" style="left:1416px;top:194px">&lt;绝对访问&gt;</p><p class="g" style="left:1567px;top:194px"><u>1 s</u></p>
<p style="left:455px;top:213px"><u>B</u></p><p style="left:636px;top:213px"><u>Word</u></p><p style="left:766px;top:213px"><u>Connection_1</u></p><p style="left:1066px;top:213px;color:#777">&lt;未定义&gt;</p><p style="left:1216px;top:213px"><u>%MW2</u></p><p style="left:1416px;top:213px">&lt;绝对访问&gt;</p><p style="left:1567px;top:213px"><u>1 s</u></p>
<p style="left:455px;top:232px"><u>C</u></p><p style="left:636px;top:232px"><u>Word</u></p><p style="left:766px;top:232px"><u>Connection_1</u></p><p style="left:1066px;top:232px;color:#777">&lt;未定义&gt;</p><p style="left:1216px;top:232px"><u>%MW4</u></p><p style="left:1416px;top:232px">&lt;绝对访问&gt;</p><p style="left:1567px;top:232px"><u>1 s</u></p>
<p style="left:455px;top:251px"><u>D</u></p><p style="left:636px;top:251px"><u>Word</u></p><p style="left:766px;top:251px"><u>Connection_1</u></p><p style="left:1066px;top:251px;color:#777">&lt;未定义&gt;</p><p style="left:1216px;top:251px"><u>%MW6</u></p><p style="left:1416px;top:251px">&lt;绝对访问&gt;</p><p style="left:1567px;top:251px"><u>1 s</u></p>
<p style="left:455px;top:270px"><u>H</u></p><p style="left:636px;top:270px"><u>Word</u></p><p style="left:766px;top:270px"><u>Connection_1</u></p><p style="left:1066px;top:270px;color:#777">&lt;未定义&gt;</p><p style="left:1216px;top:270px"><u>%MW20</u></p><p style="left:1416px;top:270px">&lt;绝对访问&gt;</p><p style="left:1567px;top:270px"><u>1 s</u></p>
<p style="left:455px;top:289px"><u>I</u></p><p style="left:636px;top:289px"><u>Word</u></p><p style="left:766px;top:289px"><u>Connection_1</u></p><p style="left:1066px;top:289px;color:#777">&lt;未定义&gt;</p><p style="left:1216px;top:289px"><u>%MW22</u></p><p style="left:1416px;top:289px">&lt;绝对访问&gt;</p><p style="left:1567px;top:289px"><u>1 s</u></p>
<p style="left:455px;top:308px"><u>J</u></p><p style="left:636px;top:308px"><u>Word</u></p><p style="left:766px;top:308px"><u>Connection_1</u></p><p style="left:1066px;top:308px;color:#777">&lt;未定义&gt;</p><p style="left:1216px;top:308px"><u>%MW24</u></p><p style="left:1416px;top:308px">&lt;绝对访问&gt;</p><p style="left:1567px;top:308px"><u>1 s</u></p>
<p style="left:436px;top:328px">&lt;添加&gt;</p>

<!-- h scrollbar -->
<div style="left:413px;top:629px;width:1244px;height:17px;background:#d0d0d0;border-top:1px solid #909090"></div>
<div class="b" style="left:414px;top:630px;width:17px;height:16px;border-color:#fff"></div>
<svg style="left:419px;top:634px;width:8px;height:8px" viewBox="0 0 8 8"><path fill="none" stroke="#333" stroke-width="2" d="M6 1 2 4l4 3"/></svg>
<div style="left:432px;top:630px;width:1073px;height:16px;background:linear-gradient(#f4f4f4,#d6d6d6);border:1px solid #fff"></div>
<div style="left:965px;top:634px;width:8px;height:8px;background:repeating-linear-gradient(90deg,#555 0 1px,transparent 1px 2px)"></div>
<div class="b" style="left:1639px;top:630px;width:17px;height:16px;border-color:#fff"></div>
<svg style="left:1644px;top:634px;width:8px;height:8px" viewBox="0 0 8 8"><path fill="none" stroke="#333" stroke-width="2" d="M2 1l4 3-4 3"/></svg>
<div style="left:389px;top:646px;width:1268px;height:2px;background:#909090"></div>
<div style="left:389px;top:648px;width:1268px;height:5px;background:#ececec"></div>
<div style="left:993px;top:648px;width:24px;height:5px;background:#b8b8b8;border:1px solid #808080;border-top:0;border-bottom:0"></div>
<div style="left:1027px;top:648px;width:24px;height:5px;border:1px solid #a0a0a0;border-top:0;border-bottom:0"></div>
<div style="left:1002px;top:649px;width:0;height:0;border:3px solid transparent;border-bottom:3px solid #111;border-top:0"></div>
<div style="left:1036px;top:649px;width:0;height:0;border:3px solid transparent;border-top:3px solid #777;border-bottom:0"></div>
<div style="left:389px;top:653px;width:1268px;height:1px;background:#fff"></div>
<div style="left:389px;top:654px;width:1268px;height:19px;background:#acacac"></div>
<p class="w" style="left:983px;top:655px;font-weight:bold"><u>HMI</u> 变量参数</p>
<div style="left:389px;top:673px;width:1268px;height:3px;background:#1e2438"></div>

<!-- inspector -->
<div style="left:389px;top:676px;width:1268px;height:24px;background:#acacac"></div>
<p class="w" style="left:394px;top:679px;font-size:13px;color:#f0f0f0">A [HMI_Tag]</p>
<div style="left:1350px;top:679px;width:74px;height:21px;background:#e8e8e8;border-left:1px solid #8a8a8a;border-top:1px solid #d0d0d0"></div>
<svg style="left:1353px;top:682px"><use href="#prop"/></svg>
<p style="left:1371px;top:682px;font-size:14px;font-weight:bold">属性</p>
<div style="left:1426px;top:679px;width:80px;height:21px;background:linear-gradient(#d4d4d4,#c0c0c0);border:1px solid #8a8a8a;border-bottom:0"></div>
<svg style="left:1429px;top:682px"><use href="#inf"/></svg>
<p style="left:1448px;top:682px;font-size:14px;color:#444">信息</p>
<svg style="left:1488px;top:683px"><use href="#yel"/></svg>
<div style="left:1508px;top:679px;width:74px;height:21px;background:linear-gradient(#d4d4d4,#c0c0c0);border:1px solid #8a8a8a;border-bottom:0"></div>
<svg style="left:1511px;top:682px"><use href="#diag"/></svg>
<p style="left:1530px;top:682px;font-size:14px;color:#444">诊断</p>
<div style="left:1603px;top:684px;width:9px;height:9px;background:#fff;box-shadow:2px -2px 0 -1px #fff"></div>
<div style="left:1621px;top:683px;width:11px;height:10px;background:repeating-linear-gradient(#d8d8d8 0 2px,#999 2px 3px);border:1px solid #999"></div>
<div style="left:1639px;top:685px;width:0;height:0;border:6px solid transparent;border-top:7px solid #ececec;border-bottom:0"></div>
<div style="left:389px;top:700px;width:1268px;height:3px;background:#efefef"></div>
<div style="left:389px;top:703px;width:1268px;height:25px;background:#c8c8c8;border-bottom:1px solid #808080"></div>
<div class="tab" style="left:395px;width:63px;height:22px;background:linear-gradient(#f6f6f6,#e8e8e8);color:#111">属性</div>
<div class="tab" style="left:459px;width:63px">事件</div>
<div class="tab" style="left:523px;width:63px">文本</div>
<div style="left:389px;top:728px;width:1268px;height:253px;background:#e8e8e8"></div>
<div style="left:391px;top:762px;width:172px;height:219px;background:repeating-linear-gradient(#efefef 0 18px,#fff 18px 19px)"></div>
<div style="left:407px;top:762px;width:27px;height:18px;background:#c5d0d8"></div>
<p style="left:408px;top:762px">常规</p><p style="left:408px;top:781px">设置</p><p style="left:408px;top:800px">范围</p><p style="left:408px;top:819px">线形标定</p><p style="left:408px;top:838px">值</p><p style="left:408px;top:857px">注释</p><p style="left:408px;top:876px">指针化</p><p style="left:408px;top:895px">优良生产规范</p>
<div style="left:563px;top:731px;width:7px;height:250px;background:#e8e8e8;border:1px solid #a8a8a8;border-bottom:0"></div>
<div style="left:563px;top:826px;width:7px;height:24px;background:#c0c0c0;border:1px solid #909090"></div>
<div style="left:564px;top:835px;width:0;height:0;border:3px solid transparent;border-right:4px solid #111;border-left:0"></div>
<div style="left:563px;top:860px;width:7px;height:24px;background:#c0c0c0;border:1px solid #909090"></div>
<div style="left:564px;top:869px;width:0;height:0;border:3px solid transparent;border-left:4px solid #111;border-right:0"></div>

<p style="left:582px;top:741px;font-size:14px">常规</p>
<div style="left:616px;top:755px;width:1028px;height:1px;background:#111"></div>

<!-- group 1 -->
<div style="left:582px;top:767px;width:524px;height:199px;background:#c8c8c8;border:1px solid #b4b4b4"></div>
<p style="left:597px;top:773px;font-size:14px;font-weight:bold">常规</p>
<p class="lb" style="right:950px;top:798px">名称<span>:</span></p>
<p class="lb" style="right:950px;top:822px">显示名称<span>:</span></p>
<p class="lb" style="right:950px;top:846px"><u>PLC</u> 变量<span>:</span></p>
<p class="lb" style="right:950px;top:870px">连接<span>:</span></p>
<p class="lb g" style="right:950px;top:894px;color:#8a8a8a"><u>PLC</u> 名称<span style="color:#8a8a8a">:</span></p>
<p class="lb" style="right:950px;top:918px">地址<span>:</span></p>
<p class="lb" style="right:950px;top:942px">访问模式<span>:</span></p>
<div class="f" style="left:744px;top:797px;width:350px"><u>A</u></div>
<div class="f" style="left:744px;top:821px;width:315px"></div>
<div class="b ls" style="left:1059px;top:821px"></div><div class="b dn" style="left:1077px;top:821px"></div>
<div class="f" style="left:744px;top:845px;width:291px;color:#909090">&lt;未定义&gt;</div>
<div class="b ls" style="left:1035px;top:845px"></div><div class="b dot" style="left:1053px;top:845px"></div>
<svg style="left:1075px;top:846px"><use href="#arr"/></svg>
<div class="f" style="left:744px;top:869px;width:315px"><u>Connection_1</u></div>
<div class="b ls" style="left:1059px;top:869px"></div><div class="b dot" style="left:1077px;top:869px"></div>
<div class="f" style="left:744px;top:893px;width:350px;background:#c8c8c8"></div>
<div class="f" style="left:744px;top:917px;width:333px"><u>%MW0</u></div><div class="b dn" style="left:1077px;top:917px"></div>
<div class="f" style="left:744px;top:941px;width:333px;background:#dedede">&lt;绝对访问&gt;</div>
<div class="b" style="left:1077px;top:941px;background:#e4e4e4"></div>
<div style="left:1081px;top:947px;width:0;height:0;border:4px solid transparent;border-top:5px solid #909090;border-bottom:0"></div>

<!-- group 2 -->
<div style="left:1112px;top:767px;width:525px;height:154px;background:#c8c8c8;border:1px solid #b4b4b4"></div>
<p style="left:1127px;top:773px;font-size:14px;font-weight:bold">设置</p>
<p class="lb" style="right:432px;top:798px">数据类型<span>:</span></p>
<p class="lb" style="right:432px;top:822px">长度<span>:</span></p>
<p class="lb" style="right:432px;top:870px">编码<span>:</span></p>
<div class="f" style="left:1262px;top:797px;width:345px"><u>Word</u></div><div class="b ls" style="left:1607px;top:797px;width:18px"></div>
<div class="f" style="left:1262px;top:821px;width:73px;background:#dedede;color:#777"><u>2</u></div>
<div class="b" style="left:1335px;top:821px;width:17px"></div>
<div style="left:1339px;top:823px;width:0;height:0;border:4px solid transparent;border-bottom:5px solid #909090;border-top:0"></div>
<div style="left:1339px;top:831px;width:0;height:0;border:4px solid transparent;border-top:5px solid #909090;border-bottom:0"></div>
<div class="f" style="left:1262px;top:869px;width:345px">二进制</div><div class="b dn" style="left:1607px;top:869px;width:18px"></div>

<!-- orange badge -->
<div style="left:1662px;top:917px;width:46px;height:46px;border-radius:50%;background:#f58a2c;border:2px solid #f0e4d8;box-shadow:0 0 2px #888"></div>
<p class="w" style="left:1668px;top:930px;font-size:12px;font-weight:bold">76</p>

<!-- taskbar -->
<div style="left:0;top:981px;width:1679px;height:28px;background:#1c1c1c"></div>
<div style="left:36px;top:990px;width:0;height:0;border:6px solid transparent;border-right:6px solid #fff;border-left:0"></div>
<p class="w" style="left:53px;top:987px;font-size:13px;font-weight:bold">Portal <em>视图</em></p>
<div style="left:181px;top:985px;width:113px;height:20px;background:#c0c0c0"></div>
<svg style="left:183px;top:987px"><use href="#ov"/></svg><p style="left:205px;top:986px;font-size:13px;color:#222">总览</p>
<div style="left:297px;top:985px;width:113px;height:20px;background:#c0c0c0"></div>
<svg style="left:300px;top:987px"><use href="#mail"/></svg><p style="left:320px;top:986px;color:#222"><u>HMI</u> 报警</p>
<div style="left:413px;top:985px;width:113px;height:20px;background:#fff"></div>
<svg style="left:417px;top:987px"><use href="#tb"/></svg><p style="left:436px;top:986px"><u>HMI</u> <b>报警</b></p>
<svg style="left:1390px;top:987px"><use href="#ck"/></svg>
<p class="w" style="left:1411px;top:987px;font-size:12.500px">项目 <u style="font-size:12px;color:#cfe0f4">2016.1.8</u> 已打开。</p>
</body></html>
